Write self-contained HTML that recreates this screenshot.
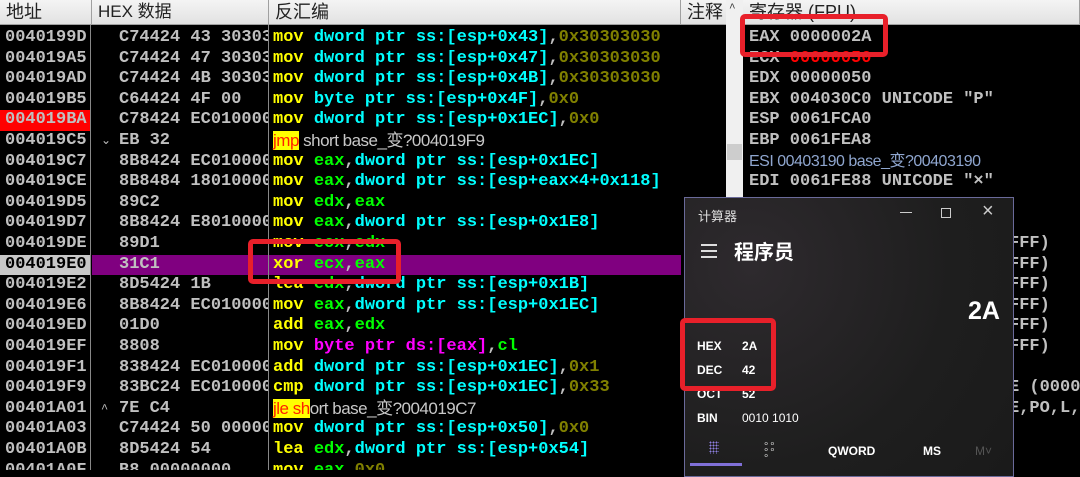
<!DOCTYPE html>
<html><head><meta charset="utf-8"><style>
*{margin:0;padding:0;box-sizing:border-box}
html,body{width:1080px;height:470px}
body{background:#000;position:relative;overflow:hidden;font-family:"Liberation Mono","Noto Sans CJK SC",monospace;font-size:17px;color:#c0c0c0}
.hdr{position:absolute;top:0;height:25px;background:linear-gradient(#f4f4f4,#e2e2e2);border-right:1px solid #a0a0a0;border-bottom:1px solid #a0a0a0;color:#222;font-family:"Liberation Sans","Noto Sans CJK SC",sans-serif;font-size:18px;line-height:24px;padding-left:6px;white-space:nowrap;overflow:hidden}
.col{position:absolute;top:25px;bottom:0;overflow:hidden}
.r{position:absolute;left:0;right:0;height:20.6px;line-height:20.6px;white-space:pre;font-weight:bold;margin-top:3px}
.y{color:#ffff00}.c{color:#00ffff}.g{color:#00ff00}.o{color:#808000}.m{color:#ff00ff}
.p{font-family:"Liberation Sans","Noto Sans CJK SC",sans-serif;font-weight:normal;color:#c8c8c8;letter-spacing:-0.5px}
.jb{background:#ffff00;color:#ff2000}
.box{position:absolute;border:5px solid #e8202a;border-radius:5px}
.calc{position:absolute;left:684px;top:197px;width:330px;height:280px;background:radial-gradient(circle at 20% 25%,#2e2a2e,#1e1e1e 60%,#1a1a1a);border:1px solid #6a6a9a;font-family:"Liberation Sans","Noto Sans CJK SC",sans-serif;color:#fff}
.calc div{position:absolute;white-space:nowrap}
.a .r{padding-left:5px}
.h .r{padding-left:27px}
</style></head><body>
<div class="hdr" style="left:0;width:92px">地址</div>
<div class="hdr" style="left:92px;width:177px;font-size:17px">HEX 数据</div>
<div class="hdr" style="left:269px;width:412px">反汇编</div>
<div class="hdr" style="left:681px;width:46px">注释</div>
<div style="position:absolute;left:726px;top:0;width:17px;height:470px;background:#f0f0f0"></div>
<div style="position:absolute;left:729px;top:3px;font-size:11px;color:#333">^</div>
<div style="position:absolute;left:727px;top:144px;width:15px;height:16px;background:#cdcdcd"></div>
<div class="hdr" style="left:743px;width:337px">寄存器 (FPU)</div>

<div class="col a" style="left:0;width:91px;border-right:1px solid #888">
<div class="r" style="top:0">0040199D</div>
<div class="r" style="top:20.6px">004019A5</div>
<div class="r" style="top:41.2px">004019AD</div>
<div class="r" style="top:61.8px">004019B5</div>
<div class="r" style="top:82.4px;background:#ff0000">004019BA</div>
<div class="r" style="top:103px">004019C5</div>
<div class="r" style="top:123.6px">004019C7</div>
<div class="r" style="top:144.2px">004019CE</div>
<div class="r" style="top:164.8px">004019D5</div>
<div class="r" style="top:185.4px">004019D7</div>
<div class="r" style="top:206px">004019DE</div>
<div class="r" style="top:226.6px;background:#c8c8c8;color:#000">004019E0</div>
<div class="r" style="top:247.2px">004019E2</div>
<div class="r" style="top:267.8px">004019E6</div>
<div class="r" style="top:288.4px">004019ED</div>
<div class="r" style="top:309px">004019EF</div>
<div class="r" style="top:329.6px">004019F1</div>
<div class="r" style="top:350.2px">004019F9</div>
<div class="r" style="top:370.8px">00401A01</div>
<div class="r" style="top:391.4px">00401A03</div>
<div class="r" style="top:412px">00401A0B</div>
<div class="r" style="top:432.6px">00401A0F</div>
</div>

<div class="col h" style="left:92px;width:177px;border-right:1px solid #888">
<div class="r" style="top:0">C74424 43 30303030</div>
<div class="r" style="top:20.6px">C74424 47 30303030</div>
<div class="r" style="top:41.2px">C74424 4B 30303030</div>
<div class="r" style="top:61.8px">C64424 4F 00</div>
<div class="r" style="top:82.4px">C78424 EC01000000</div>
<div class="r" style="top:103px">EB 32<span style="position:absolute;left:9px;font-size:12px;font-weight:normal">⌄</span></div>
<div class="r" style="top:123.6px">8B8424 EC010000</div>
<div class="r" style="top:144.2px">8B8484 18010000</div>
<div class="r" style="top:164.8px">89C2</div>
<div class="r" style="top:185.4px">8B8424 E8010000</div>
<div class="r" style="top:206px">89D1</div>
<div class="r" style="top:226.6px;background:#800080">31C1</div>
<div class="r" style="top:247.2px">8D5424 1B</div>
<div class="r" style="top:267.8px">8B8424 EC010000</div>
<div class="r" style="top:288.4px">01D0</div>
<div class="r" style="top:309px">8808</div>
<div class="r" style="top:329.6px">838424 EC01000001</div>
<div class="r" style="top:350.2px">83BC24 EC01000033</div>
<div class="r" style="top:370.8px">7E C4<span style="position:absolute;left:9px;font-size:12px;font-weight:normal">^</span></div>
<div class="r" style="top:391.4px">C74424 50 00000000</div>
<div class="r" style="top:412px">8D5424 54</div>
<div class="r" style="top:432.6px">B8 00000000</div>
</div>

<div class="col" style="left:269px;width:412px">
<div class="r" style="top:0;left:4px"><span class="y">mov</span> <span class="c">dword ptr ss:[esp+0x43]</span>,<span class="o">0x30303030</span></div>
<div class="r" style="top:20.6px;left:4px"><span class="y">mov</span> <span class="c">dword ptr ss:[esp+0x47]</span>,<span class="o">0x30303030</span></div>
<div class="r" style="top:41.2px;left:4px"><span class="y">mov</span> <span class="c">dword ptr ss:[esp+0x4B]</span>,<span class="o">0x30303030</span></div>
<div class="r" style="top:61.8px;left:4px"><span class="y">mov</span> <span class="c">byte ptr ss:[esp+0x4F]</span>,<span class="o">0x0</span></div>
<div class="r" style="top:82.4px;left:4px"><span class="y">mov</span> <span class="c">dword ptr ss:[esp+0x1EC]</span>,<span class="o">0x0</span></div>
<div class="r p" style="top:103px;left:4px"><span class="jb">jmp</span> short base_变?004019F9</div>
<div class="r" style="top:123.6px;left:4px"><span class="y">mov</span> <span class="g">eax</span>,<span class="c">dword ptr ss:[esp+0x1EC]</span></div>
<div class="r" style="top:144.2px;left:4px"><span class="y">mov</span> <span class="g">eax</span>,<span class="c">dword ptr ss:[esp+eax×4+0x118]</span></div>
<div class="r" style="top:164.8px;left:4px"><span class="y">mov</span> <span class="g">edx</span>,<span class="g">eax</span></div>
<div class="r" style="top:185.4px;left:4px"><span class="y">mov</span> <span class="g">eax</span>,<span class="c">dword ptr ss:[esp+0x1E8]</span></div>
<div class="r" style="top:206px;left:4px"><span class="y">mov</span> <span class="g">ecx</span>,<span class="g">edx</span></div>
<div class="r" style="top:226.6px;left:0;background:#800080;padding-left:4px"><span class="y">xor</span> <span class="g">ecx</span>,<span class="g">eax</span></div>
<div class="r" style="top:247.2px;left:4px"><span class="y">lea</span> <span class="g">edx</span>,<span class="c">dword ptr ss:[esp+0x1B]</span></div>
<div class="r" style="top:267.8px;left:4px"><span class="y">mov</span> <span class="g">eax</span>,<span class="c">dword ptr ss:[esp+0x1EC]</span></div>
<div class="r" style="top:288.4px;left:4px"><span class="y">add</span> <span class="g">eax</span>,<span class="g">edx</span></div>
<div class="r" style="top:309px;left:4px"><span class="y">mov</span> <span class="m">byte ptr ds:[eax]</span>,<span class="g">cl</span></div>
<div class="r" style="top:329.6px;left:4px"><span class="y">add</span> <span class="c">dword ptr ss:[esp+0x1EC]</span>,<span class="o">0x1</span></div>
<div class="r" style="top:350.2px;left:4px"><span class="y">cmp</span> <span class="c">dword ptr ss:[esp+0x1EC]</span>,<span class="o">0x33</span></div>
<div class="r p" style="top:370.8px;left:4px"><span class="jb">jle sh</span>ort base_变?004019C7</div>
<div class="r" style="top:391.4px;left:4px"><span class="y">mov</span> <span class="c">dword ptr ss:[esp+0x50]</span>,<span class="o">0x0</span></div>
<div class="r" style="top:412px;left:4px"><span class="y">lea</span> <span class="g">edx</span>,<span class="c">dword ptr ss:[esp+0x54]</span></div>
<div class="r" style="top:432.6px;left:4px"><span class="y">mov</span> <span class="g">eax</span>,<span class="o">0x0</span></div>
</div>

<div class="col" style="left:749px;width:331px">
<div class="r" style="top:0">EAX 0000002A</div>
<div class="r" style="top:20.6px">ECX <span style="color:#ff0000">00000050</span></div>
<div class="r" style="top:41.2px">EDX 00000050</div>
<div class="r" style="top:61.8px">EBX 004030C0 UNICODE "P"</div>
<div class="r" style="top:82.4px">ESP 0061FCA0</div>
<div class="r" style="top:103px">EBP 0061FEA8</div>
<div class="r p" style="top:123.6px;color:#8fa6cf;font-size:16px">ESI 00403190 base_变?00403190</div>
<div class="r" style="top:144.2px">EDI 0061FE88 UNICODE "×"</div>
<div class="r" style="top:206px;left:260px">FFF)</div>
<div class="r" style="top:226.6px;left:260px">FFF)</div>
<div class="r" style="top:247.2px;left:260px">FFF)</div>
<div class="r" style="top:267.8px;left:260px">FFF)</div>
<div class="r" style="top:288.4px;left:260px">FFF)</div>
<div class="r" style="top:309px;left:260px">FFF)</div>
<div class="r" style="top:350.2px;left:260px">E (0000</div>
<div class="r" style="top:370.8px;left:260px">E,PO,L,E</div>
</div>

<div class="calc">
<div style="left:13px;top:8px;font-size:13px;color:#ddd">计算器</div>
<div style="left:215px;top:14px;width:12px;height:1px;background:#ccc"></div>
<div style="left:256px;top:10px;width:10px;height:10px;border:1px solid #ccc"></div>
<div style="left:297px;top:2px;font-size:20px;color:#ccc;font-weight:100">×</div>
<div style="left:16px;top:46px;width:16px;height:1.5px;background:#ddd"></div>
<div style="left:16px;top:52px;width:16px;height:1.5px;background:#ddd"></div>
<div style="left:16px;top:58px;width:16px;height:1.5px;background:#ddd"></div>
<div style="left:49px;top:38px;font-size:20px;font-weight:bold">程序员</div>
<div style="left:283px;top:99px;font-size:25px;font-weight:bold">2A</div>
<div style="left:12px;top:141px;font-size:12px;font-weight:bold">HEX</div><div style="left:57px;top:141px;font-size:12px;font-weight:bold">2A</div>
<div style="left:12px;top:165px;font-size:12px;font-weight:bold">DEC</div><div style="left:57px;top:165px;font-size:12px;font-weight:bold">42</div>
<div style="left:12px;top:189px;font-size:12px;font-weight:bold">OCT</div><div style="left:57px;top:189px;font-size:12px;font-weight:bold">52</div>
<div style="left:12px;top:213px;font-size:12px;font-weight:bold">BIN</div><div style="left:57px;top:213px;font-size:12px">0010 1010</div>
<div style="left:24px;top:243px;width:10px;height:13px;background:radial-gradient(circle,#8e7fe0 40%,transparent 45%) 0 0/3px 3px"></div>
<div style="left:5px;top:265px;width:52px;height:3px;background:#8070d8"></div>
<div style="left:78px;top:244px;font-size:10px;color:#ccc;line-height:6px">∘∘<br>∘∘<br>∘</div>
<div style="left:143px;top:246px;font-size:12px;font-weight:bold">QWORD</div>
<div style="left:238px;top:246px;font-size:12px;font-weight:bold">MS</div>
<div style="left:290px;top:246px;font-size:12px;color:#555">M˅</div>
</div>

<div class="box" style="left:740px;top:14px;width:148px;height:43px"></div>
<div class="box" style="left:248px;top:239px;width:153px;height:45px"></div>
<div class="box" style="left:680px;top:318px;width:96px;height:73px"></div>
</body></html>
